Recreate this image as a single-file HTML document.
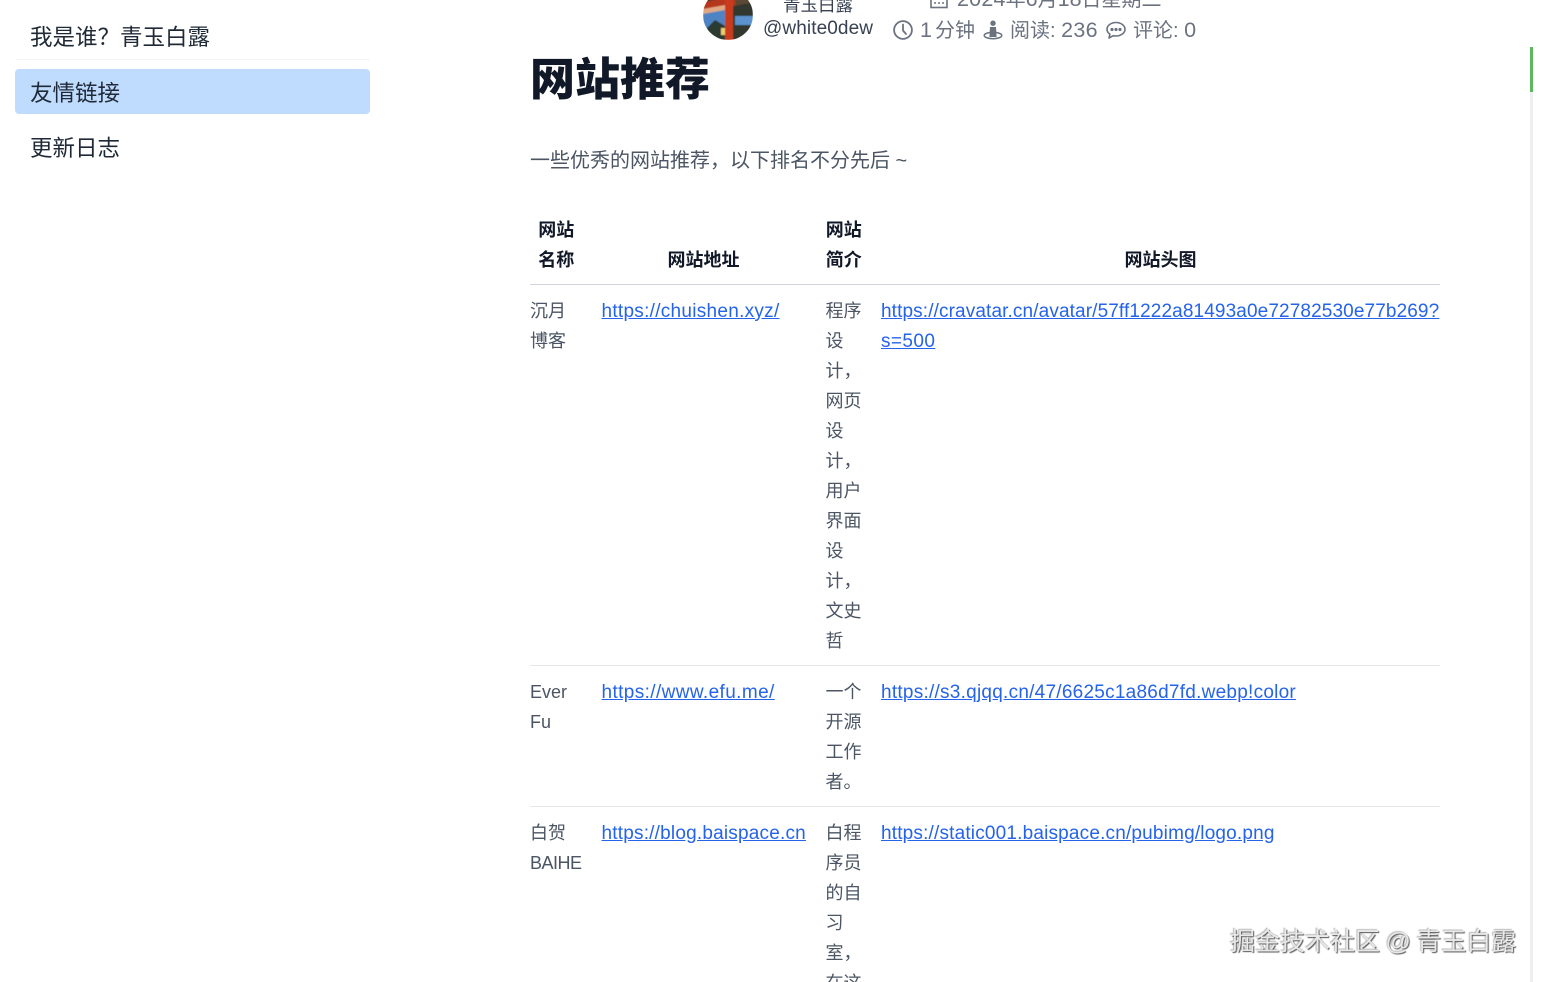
<!DOCTYPE html>
<html lang="zh-CN">
<head>
<meta charset="utf-8">
<title>网站推荐</title>
<style>
html,body{margin:0;padding:0;background:#fff;width:1542px;height:982px;overflow:hidden}
#p{width:1542px;height:982px;position:relative;overflow:hidden;font-family:"Liberation Sans","Noto Sans CJK SC",sans-serif;color:#4b5563}
.a{position:absolute;white-space:nowrap}
.nav{position:absolute;left:15px;width:355px;height:45px;line-height:47px;font-size:22.5px;color:#1f2937;box-sizing:border-box;padding-left:15px;border-radius:4px}
.sep{position:absolute;left:15px;width:355px;height:1px;background:#f5f5f5;top:59px}
.meta{font-size:20px;line-height:30px;color:#6b7280}
.d{font-size:21.5px}
h1{position:absolute;left:530px;top:50px;margin:0;font-size:45px;line-height:60px;font-weight:900;color:#111827;white-space:nowrap}
.intro{position:absolute;left:530px;top:146px;margin:0;font-size:20px;line-height:30px;color:#4b5563;white-space:nowrap}
table{position:absolute;left:530px;top:214px;width:910px;table-layout:fixed;border-collapse:collapse;font-size:18px;line-height:30px}
th{font-weight:700;color:#111827;text-align:center;vertical-align:bottom;padding:1px 0 9px;border-bottom:1px solid #d1d5db;white-space:nowrap}
td{vertical-align:top;padding:11px 0 9px;border-bottom:1px solid #e5e7eb;color:#4b5563;white-space:nowrap}
tr:last-child td{border-bottom:0}
a{color:#2563eb;text-decoration:underline;font-size:19px;line-height:20px}
.wm{position:absolute;left:1230px;top:924px;font-size:25px;line-height:36px;color:#e8e8e8;white-space:nowrap;word-spacing:-1.5px;text-shadow:1px 1px 1px #555,-1px -1px 1px #bbb}
.bar{position:absolute;left:1530px;top:47px;width:3px;height:935px;background:#eee}
.bar i{display:block;width:3px;height:45px;background:#5cb85c}
</style>
</head>
<body>
<div id="p">
<div class="nav" style="top:14px">我是谁&#xFF1F;青玉白露</div>
<div class="sep"></div>
<div class="nav" style="top:69px;background:#bfdbfe;line-height:49px">友情链接</div>
<div class="nav" style="top:125px">更新日志</div>

<svg class="a" style="left:703px;top:-10px" width="50" height="50" viewBox="0 0 50 50">
<defs><clipPath id="c"><circle cx="25" cy="25" r="25"/></clipPath><filter id="b"><feGaussianBlur stdDeviation=".6"/></filter></defs>
<g clip-path="url(#c)"><g filter="url(#b)">
<rect width="50" height="50" fill="#33392f"/>
<rect x="0" y="20" width="24" height="20" fill="#4f84c4"/>
<rect x="32" y="26" width="18" height="9" fill="#5c93cf"/>
<path d="M4 38 12 30 22 36V50H4Z" fill="#2c3a33"/>
<path d="M0 12 50 3V12L0 22Z" fill="#b5391f"/>
<path d="M0 19 22 15V20L0 24Z" fill="#e2a883"/>
<path d="M32 10 50 8V13L32 15Z" fill="#5a4a35"/>
<rect x="22" y="0" width="8" height="50" fill="#c93a1a"/>
<rect x="18" y="38" width="4" height="7" fill="#e8cf70"/>
</g></g>
</svg>
<div class="a" style="left:783px;top:-7px;font-size:17.5px;line-height:24px;color:#374151">青玉白露</div>
<div class="a" style="left:763px;top:17px;font-size:19px;line-height:24px;color:#374151;letter-spacing:.1px">@white0dew</div>

<svg class="a" style="left:929px;top:-8px" width="20" height="20" viewBox="0 0 20 20" fill="none" stroke="#6b7280" stroke-width="1.6"><rect x="2" y="2" width="16" height="13.500"/><path d="M5 11h2M9 11h2M13 11h2"/></svg>
<div class="a meta" style="left:957px;top:-16px"><span class="d" style="letter-spacing:.2px">2024</span>年<span class="d">6</span>月<span class="d">18</span>日星期二</div>

<svg class="a" style="left:893px;top:20px" width="20" height="20" viewBox="0 0 20 20" fill="none" stroke="#6b7280" stroke-width="1.8"><circle cx="10" cy="10" r="8.900"/><path d="M10 4.500V10.500L13 14" stroke-linecap="round"/></svg>
<div class="a meta" style="left:920px;top:15px"><span class="d">1</span><span style="margin-left:3px">分钟</span></div>

<svg class="a" style="left:983px;top:20px" width="20" height="20" viewBox="0 0 20 20"><circle cx="10" cy="3.200" r="2.700" fill="#6b7280"/><ellipse cx="10" cy="15.500" rx="8.800" ry="3.200" fill="none" stroke="#6b7280" stroke-width="1.500"/><path d="M7 7h6l.6 10H6.400Z" fill="#6b7280"/></svg>
<div class="a meta" style="left:1010px;top:15px">阅读: <span class="d" style="letter-spacing:.3px">236</span></div>

<svg class="a" style="left:1106px;top:20px" width="20" height="20" viewBox="0 0 20 20" fill="none" stroke="#6b7280" stroke-width="1.600"><path d="M10 2.500C5 2.500 1 5.500 1 9.300c0 2 1.100 3.700 2.900 5L3 18l4.300-2.300c.9.200 1.800.3 2.700.3 5 0 9-3 9-6.700S15 2.500 10 2.500Z" stroke-linejoin="round"/><circle cx="6" cy="9.500" r=".8" fill="#6b7280"/><circle cx="10" cy="9.500" r=".8" fill="#6b7280"/><circle cx="14" cy="9.500" r=".8" fill="#6b7280"/></svg>
<div class="a meta" style="left:1133px;top:15px">评论: <span class="d">0</span></div>

<h1>网站推荐</h1>
<p class="intro">一些优秀的网站推荐&#xFF0C;以下排名不分先后 ~</p>

<table>
<colgroup><col style="width:71.5px"><col style="width:224px"><col style="width:55.5px"><col style="width:559px"></colgroup>
<thead>
<tr><th style="padding-right:19px">网站<br>名称</th><th style="padding-right:20px">网站地址</th><th style="padding-right:19px">网站<br>简介</th><th>网站头图</th></tr>
</thead>
<tbody>
<tr>
<td>沉月<br>博客</td>
<td><a href="#" style="letter-spacing:.28px">https://chuishen.xyz/</a></td>
<td>程序<br>设<br>计&#xFF0C;<br>网页<br>设<br>计&#xFF0C;<br>用户<br>界面<br>设<br>计&#xFF0C;<br>文史<br>哲</td>
<td><a href="#" style="letter-spacing:.12px">https://cravatar.cn/avatar/57ff1222a81493a0e72782530e77b269?</a><br><a href="#" style="letter-spacing:.4px">s=500</a></td>
</tr>
<tr>
<td>Ever<br>Fu</td>
<td><a href="#" style="letter-spacing:.39px">https://www.efu.me/</a></td>
<td>一个<br>开源<br>工作<br>者。</td>
<td><a href="#" style="letter-spacing:.25px">https://s3.qjqq.cn/47/6625c1a86d7fd.webp!color</a></td>
</tr>
<tr>
<td>白贺<br><span style="letter-spacing:-.5px">BAIHE</span></td>
<td><a href="#" style="letter-spacing:.2px">https://blog.baispace.cn</a></td>
<td>白程<br>序员<br>的自<br>习<br>室&#xFF0C;<br>在这</td>
<td><a href="#" style="letter-spacing:.18px">https://static001.baispace.cn/pubimg/logo.png</a></td>
</tr>
</tbody>
</table>

<div class="bar"><i></i></div>
<div class="wm">掘金技术社区 @ 青玉白露</div>
</div>
</body>
</html>
